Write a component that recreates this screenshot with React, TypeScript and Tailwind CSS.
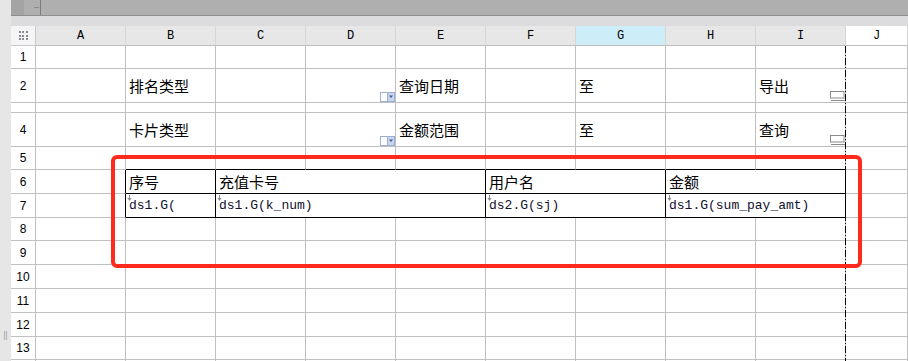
import React from 'react';

const COLS = ['A', 'B', 'C', 'D', 'E', 'F', 'G', 'H', 'I', 'J'];
const ROWS = [1, 2, 3, 4, 5, 6, 7, 8, 9, 10, 11, 12, 13, 14];

const cjk = { fontFamily: '"Noto Sans CJK SC", "Liberation Sans", sans-serif' };
const mono = { fontFamily: '"Liberation Mono", "Noto Sans CJK SC", monospace' };

type Cell = {
  span?: 'col-span-2' | 'col-span-3';
  text?: string;
  code?: string;
  icon?: 'dd' | 'btn';
  cls?: string;
};

const labels: Record<string, Cell> = {
  B2: { text: '排名类型' },
  D2: { icon: 'dd' },
  E2: { text: '查询日期' },
  G2: { text: '至' },
  I2: { text: '导出', icon: 'btn' },
  B4: { text: '卡片类型' },
  D4: { icon: 'dd' },
  E4: { text: '金额范围' },
  G4: { text: '至' },
  I4: { text: '查询', icon: 'btn' },
};

function rowCells(r: number): Cell[] {
  if (r === 6 || r === 7) {
    const head = r === 6;
    const t = 'border-r border-b border-black';
    return [
      { cls: 'border-r border-b border-r-black border-b-[#c0c0c0]' },
      { cls: t, text: head ? '序号' : undefined, code: head ? undefined : 'ds1.G(' },
      { cls: t, span: 'col-span-3', text: head ? '充值卡号' : undefined, code: head ? undefined : 'ds1.G(k_num)' },
      { cls: t, span: 'col-span-2', text: head ? '用户名' : undefined, code: head ? undefined : 'ds2.G(sj)' },
      { cls: t, span: 'col-span-2', text: head ? '金额' : undefined, code: head ? undefined : 'ds1.G(sum_pay_amt)' },
      {},
    ];
  }
  return COLS.map((c, i) => {
    const cell = labels[c + r] ?? {};
    if (r === 5 && i >= 1 && i <= 8) return { ...cell, cls: 'border-r border-b border-r-[#c0c0c0] border-b-black' };
    return cell;
  });
}

function DropIcon() {
  return (
    <svg width="15" height="10" viewBox="0 0 15 10" className="absolute right-0 bottom-0">
      <rect x="0.5" y="0.5" width="7" height="9" fill="#fff" stroke="#9aaed6" />
      <rect x="7.5" y="0.5" width="7" height="9" fill="#c9d6ee" stroke="#9aaed6" />
      <path d="M9 3.5h4l-2 2.5z" fill="#3d5a9c" />
    </svg>
  );
}

function BtnIcon() {
  return (
    <svg width="15" height="11" viewBox="0 0 15 11" className="absolute right-0 bottom-0">
      <rect x="0.5" y="0.5" width="13.5" height="6.5" fill="#fff" stroke="#8a8a8a" />
      <line x1="1" y1="9.5" x2="15" y2="9.5" stroke="#8a8a8a" />
    </svg>
  );
}

function DownMark() {
  return (
    <svg width="5" height="6" viewBox="0 0 5 6" className="absolute left-[1px] top-[1px]">
      <line x1="2.5" y1="0" x2="2.5" y2="4" stroke="#8c8c8c" />
      <path d="M0.5 3h4l-2 3z" fill="#8c8c8c" />
    </svg>
  );
}

export default function App() {
  return (
    <div className="relative w-[908px] h-[361px] overflow-hidden bg-white flex">
      <div className="w-[11px] shrink-0 bg-[#e6e6e6] flex flex-col justify-end items-center pb-[22px]">
        <span className="text-[9px] leading-none text-[#9a9a9a]">‖</span>
      </div>
      <div className="flex-1 flex flex-col">
        <div className="h-[16px] shrink-0 bg-[#afafaf] border-b border-[#8e8e8e] flex">
          <div className="w-[13px] bg-[#a4a4a4]" />
          <div className="w-[17px] border-r border-[#7c7c7c] flex items-center justify-end pr-[1px]">
            <div className="w-[5px] h-px bg-[#8a8a8a]" />
          </div>
        </div>
        <div className="h-[10px] shrink-0 bg-[#dcdcde]" />
        <div className="grid grid-cols-[25px_repeat(9,90px)_1fr] grid-rows-[20px_23px_34px_10px_34px_23px_24px_24px_23px_24px_24px_24px_24px_23px_24px]">
          <div className="bg-[#f5f5f7] border-r border-b border-[#c8c8c8] flex items-center justify-center">
            <div className="grid grid-cols-3 gap-[1.5px]">
              {Array.from({ length: 9 }).map((_, i) => (
                <span key={i} className="w-[2px] h-[2px] bg-[#8a8a94]" />
              ))}
            </div>
          </div>
          {COLS.map((c) => (
            <div
              key={c}
              style={mono}
              className={`border-b border-r border-b-[#bdbdbd] border-r-[#d6d6d6] flex items-center justify-center text-[12px] text-black ${
                c === 'G' ? 'bg-[#cdeef9]' : c === 'J' ? 'bg-white' : 'bg-[#e7e7e7]'
              }`}
            >
              {c}
            </div>
          ))}
          {ROWS.map((r) => (
            <React.Fragment key={r}>
              <div
                style={{ fontFamily: '"Liberation Sans", sans-serif' }}
                className="bg-white border-r border-b border-[#c0c0c0] flex items-center justify-center text-[12px] text-black overflow-hidden"
              >
                {r === 3 || r === 14 ? '' : r}
              </div>
              {rowCells(r).map((cell, i) => (
                <div
                  key={i}
                  className={`relative overflow-hidden flex items-center pl-[3px] ${cell.span ?? ''} ${
                    cell.cls ?? 'border-r border-b border-[#c0c0c0]'
                  }`}
                >
                  {cell.text && (
                    <span style={cjk} className="text-[15px] leading-none text-black whitespace-nowrap">
                      {cell.text}
                    </span>
                  )}
                  {cell.code && (
                    <>
                      <DownMark />
                      <span style={mono} className="text-[13px] leading-none text-[#10102c] whitespace-nowrap">
                        {cell.code}
                      </span>
                    </>
                  )}
                  {cell.icon === 'dd' && <DropIcon />}
                  {cell.icon === 'btn' && <BtnIcon />}
                </div>
              ))}
            </React.Fragment>
          ))}
        </div>
      </div>

      <svg width="2" height="316" className="absolute left-[845px] top-[46px]">
        <line x1="0.5" y1="0" x2="0.5" y2="316" stroke="#000" strokeDasharray="7 2 1 2" />
      </svg>

      <div className="absolute left-[111px] top-[155px] w-[751px] h-[113px] border-4 border-[#ff2a1c] rounded-[6px]" />
    </div>
  );
}
